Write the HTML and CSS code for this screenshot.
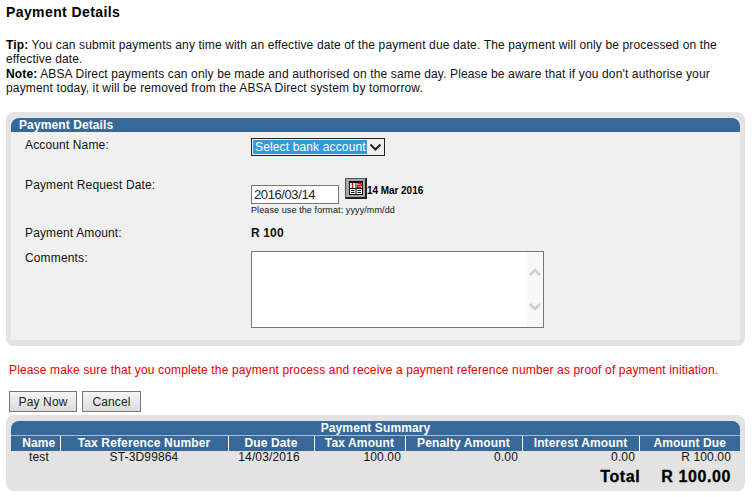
FILE: index.html
```html
<!DOCTYPE html>
<html lang="en">

<head>
    <meta charset="UTF-8">
    <title>Payment Details</title>
    <link rel="stylesheet" href="styles.css">
</head>

<body>
    <h1 class="page-title">Payment Details</h1>

    <div class="notes">
        <p><b>Tip:</b> You can submit payments any time with an effective date of the payment due date. The payment will only be processed on the effective date.</p>
        <p><b>Note:</b> ABSA Direct payments can only be made and authorised on the same day. Please be aware that if you don't authorise your payment today, it will be removed from the ABSA Direct system by tomorrow.</p>
    </div>

    <div class="panel">
        <h2 class="panel-title">Payment Details</h2>
        <div class="form-grid">
            <label>Account Name:</label>
            <div>
                <div class="select-box">
                    <span class="select-value">Select bank account</span>
                    <svg class="select-arrow" width="15" height="14" viewBox="0 0 15 14">
                        <path d="M2.5 4.5 L7.5 9.5 L12.5 4.5" fill="none" stroke="#222" stroke-width="2"/>
                    </svg>
                </div>
            </div>

            <label>Payment Request Date:</label>
            <div>
                <div class="date-line">
                    <input class="date-input" type="text" value="2016/03/14">
                    <button class="cal-btn" type="button" aria-label="Calendar">
                        <svg width="14" height="14" viewBox="0 0 14 14">
                            <rect width="14" height="14" fill="#111"/>
                            <rect x="1" y="2" width="5.5" height="5" fill="#fff"/>
                            <rect x="7.5" y="2" width="5.5" height="5" fill="#fff"/>
                            <rect x="1" y="8" width="12" height="5" fill="#fff"/>
                            <path d="M3.5 2 V7 M8.5 2.5 H12 V4.5 H8.5 V6.5 H12" fill="none" stroke="#e01010" stroke-width="1.5"/>
                            <path d="M2 9.5 H5.5 M2 11.5 H5.5 M8.5 9.5 H12 M8.5 11.5 H12 M7 8 V13" stroke="#111" stroke-width="1"/>
                        </svg>
                    </button>
                    <b class="date-long">14 Mar 2016</b>
                </div>
                <div class="date-hint">Please use the format: yyyy/mm/dd</div>
            </div>

            <label>Payment Amount:</label>
            <b>R 100</b>

            <label>Comments:</label>
            <div class="comment-box">
                <textarea class="comment-text"></textarea>
                <div class="scrollbar">
                    <svg width="12" height="10" viewBox="0 0 12 10"><path d="M1 8 L6 3 L11 8" fill="none" stroke="#cdcdcd" stroke-width="2.5"/></svg>
                    <svg width="12" height="10" viewBox="0 0 12 10"><path d="M1 2 L6 7 L11 2" fill="none" stroke="#cdcdcd" stroke-width="2.5"/></svg>
                </div>
            </div>
        </div>
    </div>

    <p class="warning">Please make sure that you complete the payment process and receive a payment reference number as proof of payment initiation.</p>

    <div class="actions">
        <button class="btn btn-pay" type="button">Pay Now</button>
        <button class="btn btn-cancel" type="button">Cancel</button>
    </div>

    <div class="panel panel-summary">
        <h2 class="panel-title panel-title-center">Payment Summary</h2>
        <table class="summary">
            <colgroup>
                <col class="c-name"><col class="c-ref"><col class="c-date"><col class="c-tax"><col class="c-penalty"><col class="c-interest"><col class="c-due">
            </colgroup>
            <thead>
                <tr>
                    <th class="name-cell">Name</th>
                    <th>Tax Reference Number</th>
                    <th>Due Date</th>
                    <th>Tax Amount</th>
                    <th>Penalty Amount</th>
                    <th>Interest Amount</th>
                    <th>Amount Due</th>
                </tr>
            </thead>
            <tbody>
                <tr>
                    <td class="center name-cell">test</td>
                    <td class="center">ST-3D99864</td>
                    <td class="center date-cell">14/03/2016</td>
                    <td class="money">100.00</td>
                    <td class="money">0.00</td>
                    <td class="money">0.00</td>
                    <td class="money money-due">R 100.00</td>
                </tr>
            </tbody>
        </table>
        <div class="total">
            <span>Total</span>
            <span>R 100.00</span>
        </div>
    </div>
</body>

</html>
```

FILE: styles.css
```css
* {
    font-family: "Liberation Sans", Arial, sans-serif;
    box-sizing: border-box;
    margin: 0;
}

body {
    width: 752px;
    padding: 0 7px 0 6px;
    font-size: 12px;
    line-height: 14px;
    letter-spacing: 0.14px;
    color: #111;
    background: #fff;
}

.page-title {
    padding-top: 4px;
    font-size: 14px;
    line-height: 16px;
    letter-spacing: 0.4px;
    color: #000;
}

.notes {
    margin-top: 18px;
}

.notes p + p {
    margin-top: 1px;
}

.notes b {
    color: #000;
}

.panel {
    margin-top: 17px;
    height: 234px;
    background: #f0f0f0;
    border: solid #e3e3e3;
    border-width: 6px 5px;
    border-radius: 8px;
}

.panel-title {
    height: 14px;
    padding-left: 8px;
    font-size: 12px;
    line-height: 14px;
    font-weight: bold;
    letter-spacing: 0.1px;
    color: #fff;
    background: #366899;
    border-radius: 8px 8px 0 0;
}

.panel-title-center {
    padding-left: 0;
    text-align: center;
}

.form-grid {
    display: grid;
    grid-template-columns: 226px 1fr;
    grid-template-rows: 40px 48px 25px auto;
    padding: 6px 0 0 14px;
}

.select-box {
    display: flex;
    width: 134px;
    height: 18px;
    border: 1px solid #222;
    padding: 1px;
    background: #eee;
}

.select-value {
    width: 115px;
    padding-left: 2px;
    line-height: 14px;
    color: #fff;
    background: #3399dd;
}

.select-arrow {
    margin-left: 1px;
}

.date-line {
    display: flex;
    align-items: flex-start;
}

.date-input {
    width: 88px;
    height: 19px;
    margin-top: 7px;
    padding: 0 2px;
    border: 1px solid #777;
    font-size: 13px;
    letter-spacing: -0.4px;
    color: #222;
    background: #fff;
    outline: none;
}

.cal-btn {
    display: flex;
    align-items: center;
    justify-content: center;
    width: 22px;
    height: 21px;
    margin: 0 0 0 6px;
    padding: 0;
    border: 1px solid #555;
    border-right: 2px solid #222;
    border-bottom: 2px solid #222;
    background: #a8a8a8;
}

.date-long {
    margin: 7px 0 0 0;
    font-size: 10px;
    line-height: 12px;
    letter-spacing: -0.05px;
    color: #000;
}

.date-hint {
    margin-top: 1px;
    font-size: 9px;
    line-height: 10px;
    letter-spacing: 0.1px;
}

.comment-box {
    display: flex;
    width: 293px;
    height: 77px;
    border: 1px solid #777;
    background: #fff;
}

.comment-text {
    flex: 1;
    border: none;
    outline: none;
    resize: none;
    overflow: hidden;
}

.scrollbar {
    display: flex;
    flex-direction: column;
    justify-content: space-between;
    align-items: center;
    width: 16px;
    padding: 15px 0;
    background: #f8f8f8;
}

.warning {
    margin-top: 17px;
    padding-left: 3px;
    color: #e00000;
    white-space: nowrap;
}

.actions {
    display: flex;
    gap: 5px;
    margin-top: 14px;
    padding-left: 3px;
}

.btn {
    height: 21px;
    padding: 0;
    border: 1px solid #777;
    font-size: 12px;
    letter-spacing: 0.14px;
    color: #222;
    background: linear-gradient(#f4f4f4, #dcdcdc);
}

.btn-pay {
    width: 68px;
}

.btn-cancel {
    width: 59px;
}

.panel-summary {
    margin-top: 3px;
    height: 76px;
    background: #e3e3e3;
}

.summary {
    width: 729px;
    table-layout: fixed;
    border-collapse: collapse;
}

.c-name { width: 49px; }
.c-ref { width: 168px; }
.c-date { width: 86px; }
.c-tax { width: 91px; }
.c-penalty { width: 117px; }
.c-interest { width: 117px; }
.c-due { width: 101px; }

.summary th {
    height: 15px;
    padding: 0;
    border-top: 1px solid #a9bdd2;
    border-left: 1px solid #fff;
    line-height: 14px;
    font-weight: bold;
    color: #fff;
    background: #366899;
}

.summary th:first-child {
    border-left: none;
}

.summary td {
    height: 13px;
    padding: 0;
    line-height: 13px;
}

.center {
    text-align: center;
}

.summary .name-cell {
    padding-left: 7px;
}

.summary .date-cell {
    padding-right: 4px;
}

.summary .money {
    padding-right: 4px;
    text-align: right;
}

.summary .money-due {
    padding-right: 9px;
}

.total {
    display: flex;
    justify-content: flex-end;
    gap: 21px;
    padding: 4px 9px 0 0;
    font-size: 16px;
    line-height: 18px;
    font-weight: bold;
    letter-spacing: 0.6px;
    -webkit-text-stroke: 0.3px #000;
    color: #000;
}
```
